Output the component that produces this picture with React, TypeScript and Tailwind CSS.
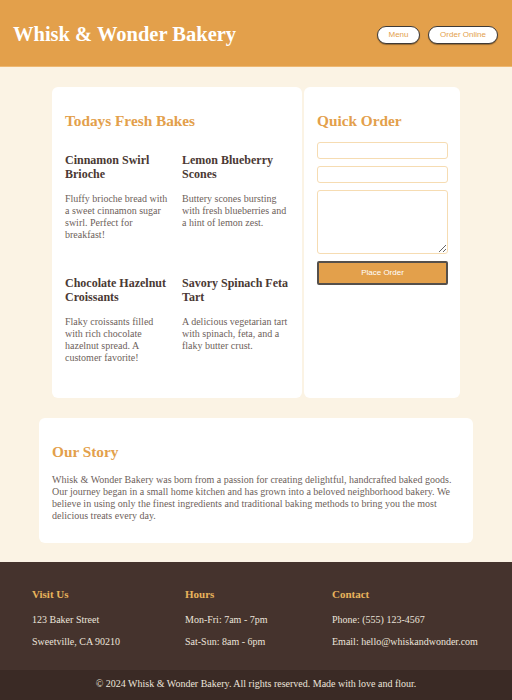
const bakes = [
  {
    title: 'Cinnamon Swirl Brioche',
    desc: 'Fluffy brioche bread with a sweet cinnamon sugar swirl. Perfect for breakfast!',
  },
  {
    title: 'Lemon Blueberry Scones',
    desc: 'Buttery scones bursting with fresh blueberries and a hint of lemon zest.',
  },
  {
    title: 'Chocolate Hazelnut Croissants',
    desc: 'Flaky croissants filled with rich chocolate hazelnut spread. A customer favorite!',
  },
  {
    title: 'Savory Spinach Feta Tart',
    desc: 'A delicious vegetarian tart with spinach, feta, and a flaky butter crust.',
  },
]

const footerCols = [
  { title: 'Visit Us', lines: ['123 Baker Street', 'Sweetville, CA 90210'], width: 'w-[153px]' },
  { title: 'Hours', lines: ['Mon-Fri: 7am - 7pm', 'Sat-Sun: 8am - 6pm'], width: 'w-[147px]' },
  { title: 'Contact', lines: ['Phone: (555) 123-4567', 'Email: hello@whiskandwonder.com'], width: 'flex-1' },
]

export default function App() {
  return (
    <div className="min-h-[700px] w-[512px] bg-[#fbf3e4] font-['Liberation_Serif',serif]">
      <header className="flex h-[67px] items-center justify-between border-b border-[#eeb872] bg-[#e3a04b] pl-[13px] pr-[14px] pt-[3px]">
        <h1 className="text-[20.5px] font-bold leading-none text-white">Whisk &amp; Wonder Bakery</h1>
        <nav className="flex gap-[8px] font-['Liberation_Sans',sans-serif]">
          <button className="h-[18px] w-[43px] rounded-full border-[1.5px] border-[#3f3a36] bg-white text-[8px] text-[#e3a04b] shadow-[0_1px_1px_rgba(0,0,0,0.35)]">
            Menu
          </button>
          <button className="h-[18px] w-[70px] rounded-full border-[1.5px] border-[#3f3a36] bg-white text-[8px] text-[#e3a04b] shadow-[0_1px_1px_rgba(0,0,0,0.35)]">
            Order Online
          </button>
        </nav>
      </header>

      <main className="pt-[20px]">
        <div className="ml-[52px] flex h-[311px] gap-[2px]">
          <section className="w-[250px] rounded-[6px] bg-white pl-[13px] pt-[24px]">
            <h2 className="text-[15.3px] font-bold leading-[20px] text-[#e3a04b]">Todays Fresh Bakes</h2>
            <div className="mt-[22px] grid grid-cols-[106px_108px] gap-x-[11px] gap-y-[35px]">
              {bakes.map((b) => (
                <div key={b.title}>
                  <h3 className="text-[12px] font-bold leading-[14px] text-[#4a3934]">{b.title}</h3>
                  <p className="mt-[12px] text-[10px] leading-[12px] text-[#6e5f5b]">{b.desc}</p>
                </div>
              ))}
            </div>
          </section>

          <section className="w-[156px] rounded-[6px] bg-white pl-[13px] pr-[12px] pt-[24px]">
            <h2 className="text-[15.3px] font-bold leading-[20px] text-[#e3a04b]">Quick Order</h2>
            <form className="mt-[11px] flex flex-col gap-[7px]">
              <input className="h-[17px] w-full rounded-[3px] border border-[#f6dcb2] bg-white" />
              <input className="h-[17px] w-full rounded-[3px] border border-[#f6dcb2] bg-white" />
              <textarea className="h-[64px] w-full rounded-[3px] border border-[#f6dcb2] bg-white" />
              <button
                type="button"
                className="h-[24px] w-full rounded-[2px] border-2 border-[#55504b] bg-[#e3a04b] font-['Liberation_Sans',sans-serif] text-[8px] text-white"
              >
                Place Order
              </button>
            </form>
          </section>
        </div>

        <section className="mx-[39px] mt-[20px] h-[125px] rounded-[6px] bg-white px-[13px] pt-[24px]">
          <h2 className="text-[15.3px] font-bold leading-[20px] text-[#e3a04b]">Our Story</h2>
          <p className="mt-[12px] text-[10px] leading-[12px] text-[#6e5f5b]">
            Whisk &amp; Wonder Bakery was born from a passion for creating delightful, handcrafted baked goods.
            Our journey began in a small home kitchen and has grown into a beloved neighborhood bakery. We
            believe in using only the finest ingredients and traditional baking methods to bring you the most
            delicious treats every day.
          </p>
        </section>
      </main>

      <footer className="mt-[19px]">
        <div className="flex h-[108px] bg-[#45332d] pl-[32px] pt-[25px]">
          {footerCols.map((c) => (
            <div key={c.title} className={c.width}>
              <h4 className="text-[11px] font-bold leading-[14px] text-[#e8b45c]">{c.title}</h4>
              <div className="mt-[13px] flex flex-col gap-[10px]">
                {c.lines.map((l) => (
                  <p key={l} className="text-[10px] leading-[12px] text-[#ece4dc]">
                    {l}
                  </p>
                ))}
              </div>
            </div>
          ))}
        </div>
        <div className="flex h-[30px] items-start justify-center bg-[#3a2a25] pt-[8px] text-[10px] leading-[12px] text-[#ece4dc]">
          © 2024 Whisk &amp; Wonder Bakery. All rights reserved. Made with love and flour.
        </div>
      </footer>
    </div>
  )
}
